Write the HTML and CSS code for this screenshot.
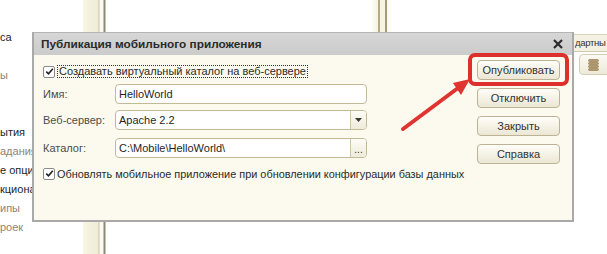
FILE: index.html
```html
<!DOCTYPE html>
<html>
<head lang="ru">
	<meta charset="utf-8">
	<title>Публикация мобильного приложения</title>
	<link rel="stylesheet" href="styles.css">
</head>
<body>

	<div class="desk">
		<div class="side-list">
			<div>са</div>
			<div></div>
			<div class="dim">ы</div>
			<div></div>
			<div></div>
			<div>ытия</div>
			<div class="dim">адания</div>
			<div>е опци</div>
			<div>кциона</div>
			<div class="dim">ипы</div>
			<div class="dim">роек</div>
		</div>
		<div class="splitter"></div>
		<div class="middle">
			<div class="rail"></div>
		</div>
		<div class="right-pane">
			<div class="tab">дартны</div>
			<div class="tool">
				<span class="tool-btn">
					<svg width="11" height="12" viewBox="0 0 11 12">
						<rect x="0.5" y="0.5" width="10" height="2" rx="1" fill="#b39a6a" stroke="#8c7448" stroke-width="0.6"/>
						<rect x="0.5" y="3.5" width="10" height="2" rx="1" fill="#b39a6a" stroke="#8c7448" stroke-width="0.6"/>
						<rect x="0.5" y="6.5" width="10" height="2" rx="1" fill="#b39a6a" stroke="#8c7448" stroke-width="0.6"/>
						<rect x="0.5" y="9.5" width="10" height="2" rx="1" fill="#b39a6a" stroke="#8c7448" stroke-width="0.6"/>
					</svg>
				</span>
			</div>
		</div>
	</div>

	<!-- the dialog window, floating over the app -->
	<div class="dialog">
		<div class="dlg-title">
			<span>Публикация мобильного приложения</span>
			<svg class="close" width="10" height="10" viewBox="0 0 10 10">
				<path d="M1 1 L9 9 M9 1 L1 9" stroke="#2b2b2b" stroke-width="2.2"/>
			</svg>
		</div>

		<div class="dlg-body">
			<div class="form">
				<label class="check first">
					<span class="box"><svg width="9" height="9" viewBox="0 0 9 9"><path d="M1.3 4.6 L3.5 6.8 L7.8 1.8" fill="none" stroke="#222" stroke-width="1.6"/></svg></span>
					<span class="focus">Создавать виртуальный каталог на веб-сервере</span>
				</label>

				<div class="field">
					<span class="lbl">Имя:</span>
					<div class="input"><span class="val">HelloWorld</span></div>
				</div>

				<div class="field">
					<span class="lbl">Веб-сервер:</span>
					<div class="input">
						<span class="val">Apache 2.2</span>
						<span class="btn-in"><svg width="7" height="4" viewBox="0 0 7 4"><path d="M0 0 H7 L3.5 4 Z" fill="#3a3a3a"/></svg></span>
					</div>
				</div>

				<div class="field third">
					<span class="lbl">Каталог:</span>
					<div class="input">
						<span class="val">C:\Mobile\HelloWorld\</span>
						<span class="btn-in dots">...</span>
					</div>
				</div>

				<label class="check last">
					<span class="box"><svg width="9" height="9" viewBox="0 0 9 9"><path d="M1.3 4.6 L3.5 6.8 L7.8 1.8" fill="none" stroke="#222" stroke-width="1.6"/></svg></span>
					<span>Обновлять мобильное приложение при обновлении конфигурации базы данных</span>
				</label>
			</div>

			<div class="buttons">
				<button type="button">Опубликовать</button>
				<button type="button">Отключить</button>
				<button type="button">Закрыть</button>
				<button type="button">Справка</button>
			</div>
		</div>
	</div>

	<!-- red annotation -->
	<div class="mark"></div>
	<svg class="arrow" width="607" height="254" viewBox="0 0 607 254">
		<line x1="403" y1="129" x2="458" y2="88" stroke="#df3430" stroke-width="4" stroke-linecap="round"/>
		<polygon points="470,79 453,83 461,95" fill="#df3430"/>
	</svg>

</body>
</html>
```

FILE: styles.css
```css
* {
	margin: 0;
	padding: 0;
	box-sizing: border-box;
}

body {
	width: 607px;
	height: 254px;
	overflow: hidden;
	background: #fff;
	font-family: "Liberation Sans", Arial, sans-serif;
	font-size: 11px;
	color: #222;
	position: relative;
}

/* app behind the dialog */
.desk {
	display: flex;
	height: 254px;
}

.side-list {
	width: 83px;
	padding-top: 28px;
	overflow: hidden;
	white-space: nowrap;
}

.side-list div {
	height: 19px;
	line-height: 19px;
	color: #1e1e1e;
}

.side-list .dim {
	color: #8f8474;
}

.splitter {
	width: 23px;
	background: linear-gradient(to right, #f7f5e4, #efecd6 15px, #c9c4ae 16px, #fbfaf2 17px, #fbfaf2 20px, #8d8977 21px, #8d8977 22px, #fff 23px);
}

.middle {
	flex: 1;
}

.rail {
	margin-left: 266px;
	width: 20px;
	height: 32px;
	background: linear-gradient(to right, #fdfcf4, #f6f3e2 6px, #b4ab86 6px, #b4ab86 8px, #f6f3e2 8px, #f6f3e2 13px, #a49b77 13px, #a49b77 15px, #faf8ec 15px, #fff);
}

.right-pane {
	width: 33px;
	padding-top: 34px;
}

.tab {
	height: 18px;
	line-height: 16px;
	padding-left: 1px;
	white-space: nowrap;
	font-size: 9.5px;
	letter-spacing: -0.3px;
	color: #333;
	background: #f4f1e2;
	border-top: 1px solid #d8d3bd;
	border-bottom: 1px solid #cfc9b1;
}

.tool {
	padding: 2px 0 0 5px;
}

.tool-btn {
	display: flex;
	align-items: center;
	justify-content: center;
	width: 40px;
	height: 21px;
	padding-right: 12px;
	border: 1px solid #d3cdb5;
	border-radius: 4px;
	background: linear-gradient(#fbfaf3, #eeeada);
}

/* dialog */
.dialog {
	position: absolute;
	left: 32px;
	top: 32px;
	width: 542px;
	height: 190px;
	border: 2px solid #a9a9a9;
	border-top: 1px solid #b5b5b5;
	background: #fcfaee;
	display: flex;
	flex-direction: column;
}

.dlg-title {
	height: 22px;
	display: flex;
	align-items: center;
	justify-content: space-between;
	padding: 0 9px 0 7px;
	background: linear-gradient(#d6d6d6, #cbcbcb);
	font-weight: bold;
	font-size: 11.8px;
	color: #2a2a2a;
}

.dlg-body {
	flex: 1;
	display: flex;
	padding: 0 12px 0 9px;
}

.form {
	flex: 1;
}

.check {
	display: flex;
	align-items: center;
	height: 13px;
	color: #2a2a2a;
}

.check.first {
	margin-top: 10px;
}

.check.last {
	margin-top: 9px;
	font-size: 10.9px;
}

.box {
	width: 12px;
	height: 12px;
	border: 1px solid #8b8b8b;
	border-radius: 2px;
	background: #fff;
	display: flex;
	align-items: center;
	justify-content: center;
	margin-right: 2px;
}

.focus {
	border: 1px dotted #333;
	padding: 0 1px;
	line-height: 11px;
}

.field {
	display: flex;
	align-items: center;
	height: 20px;
	margin-top: 6px;
}

.field.third {
	margin-top: 8px;
}

.lbl {
	width: 72px;
	color: #4c4c4c;
}

.input {
	width: 252px;
	height: 20px;
	display: flex;
	align-items: center;
	justify-content: space-between;
	border: 1px solid #c3b999;
	border-radius: 4px;
	background: #fff;
	overflow: hidden;
}

.val {
	padding-left: 3px;
	color: #1f1f1f;
}

.btn-in {
	width: 16px;
	height: 100%;
	display: flex;
	align-items: center;
	justify-content: center;
	border-left: 1px solid #cfc6a8;
	background: linear-gradient(#fdfcf6, #efebdb);
}

.btn-in.dots {
	align-items: flex-end;
	padding-bottom: 3px;
	font-size: 10px;
	line-height: 8px;
	color: #333;
}

.buttons {
	width: 83px;
	padding-top: 5px;
	display: flex;
	flex-direction: column;
	gap: 8px;
}

.buttons button {
	height: 20px;
	font-family: "Liberation Sans", Arial, sans-serif;
	font-size: 11px;
	color: #333;
	border: 1px solid #bcb396;
	border-radius: 4px;
	background: linear-gradient(#fefdf8, #ece7d4);
}

/* annotation */
.mark {
	position: absolute;
	left: 468px;
	top: 53px;
	width: 101px;
	height: 33px;
	border: 4px solid #dd2f2c;
	border-radius: 7px;
}

.arrow {
	position: absolute;
	left: 0;
	top: 0;
}
```
